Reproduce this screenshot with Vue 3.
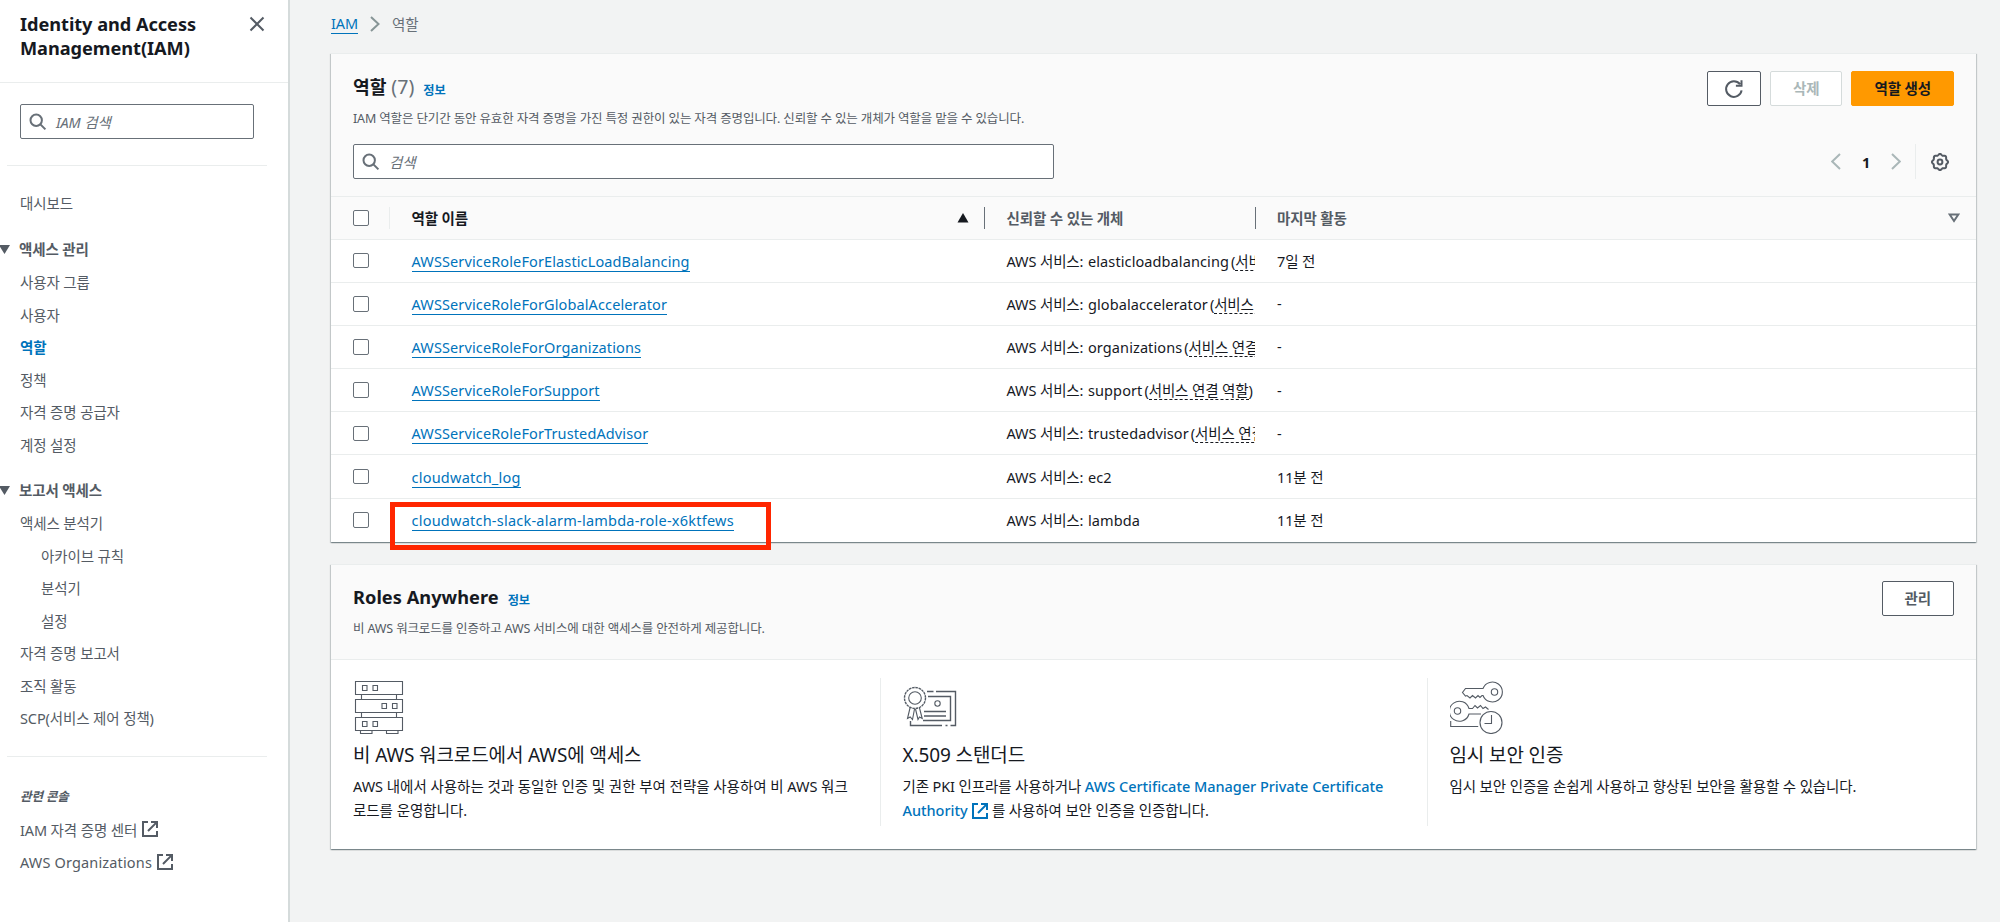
<template>
  <div class="layout">
    <aside class="sidebar">
      <header class="side-header">
        <h2>Identity and Access Management(IAM)</h2>
        <svg class="close" width="16" height="16" viewBox="0 0 16 16"><path d="M1.5 1.5l13 13M14.5 1.5l-13 13" /></svg>
      </header>
      <div class="side-search search">
        <svg width="18" height="18" viewBox="0 0 18 18"><circle cx="7.2" cy="7.2" r="5.7" /><path d="M11.4 11.4l5 5" /></svg>
        <span>IAM 검색</span>
      </div>
      <hr class="first">
      <nav>
        <a class="item">대시보드</a>
        <div v-for="group in groups" :key="group.title" class="group">
          <div class="item group-title">
            <svg width="11" height="9" viewBox="0 0 11 9"><path d="M0 0h11l-5.5 9z" /></svg>
            {{ group.title }}
          </div>
          <a v-for="item in group.items" :key="item.text" class="item" :class="{ active: item.active, sub: item.sub }">{{ item.text }}</a>
        </div>
      </nav>
      <hr class="second">
      <div class="related">관련 콘솔</div>
      <a v-for="text in related" :key="text" class="item external">
        {{ text }}
        <svg class="ext" width="16" height="16" viewBox="0 0 16 16"><path d="M6 1H1v14h14v-5M9 1h6v6M14.6 1.4L6 10" /></svg>
      </a>
    </aside>

    <main>
      <div class="breadcrumb">
        <a>IAM</a>
        <svg width="10" height="16" viewBox="0 0 10 16"><path d="M1 1l7.5 7L1 15" /></svg>
        <span>역할</span>
      </div>

      <section class="panel">
        <div class="panel-header roles-header">
          <div class="title-row">
            <h1>역할 <span class="count">(7)</span></h1>
            <a class="info">정보</a>
            <div class="actions">
              <button class="refresh">
                <svg width="20" height="20" viewBox="0 0 20 20"><path d="M17.6 11.4A7.8 7.8 0 1 1 16 5.2M17.5 1.2v5.6h-5.6" /></svg>
              </button>
              <button class="disabled">삭제</button>
              <button class="primary">역할 생성</button>
            </div>
          </div>
          <p class="desc">IAM 역할은 단기간 동안 유효한 자격 증명을 가진 특정 권한이 있는 자격 증명입니다. 신뢰할 수 있는 개체가 역할을 맡을 수 있습니다.</p>
          <div class="tools">
            <div class="search roles-search">
              <svg width="18" height="18" viewBox="0 0 18 18"><circle cx="7.2" cy="7.2" r="5.7" /><path d="M11.4 11.4l5 5" /></svg>
              <span>검색</span>
            </div>
            <div class="pager">
              <svg width="10" height="17" viewBox="0 0 10 17"><path d="M9 1L1.2 8.5 9 16" /></svg>
              <b>1</b>
              <svg width="10" height="17" viewBox="0 0 10 17"><path d="M1 1l7.8 7.5L1 16" /></svg>
              <span class="gear">
                <svg width="18" height="18" viewBox="0 0 18 18">
                  <path :d="gearPath" />
                  <circle cx="9" cy="9" r="2.4" />
                </svg>
              </span>
            </div>
          </div>
        </div>

        <table>
          <colgroup><col class="c-check"><col class="c-name"><col class="c-entity"><col></colgroup>
          <thead>
            <tr>
              <th><span class="check" /></th>
              <th class="sorted">
                <div class="th-inner">역할 이름<svg width="12" height="10" viewBox="0 0 12 10"><path d="M6 0l5.5 9.5h-11z" /></svg></div>
              </th>
              <th><div class="th-inner">신뢰할 수 있는 개체</div></th>
              <th>
                <div class="th-inner">마지막 활동<svg class="hollow" width="12" height="10" viewBox="0 0 12 10"><path d="M1.7 1.5h8.6L6 8z" /></svg></div>
              </th>
            </tr>
          </thead>
          <tbody>
            <tr v-for="role in roles" :key="role.name">
              <td><span class="check" /></td>
              <td><a class="role-link" :class="{ custom: !role.linked }">{{ role.name }}</a></td>
              <td>AWS 서비스: <span class="service">{{ role.service }}</span><template v-if="role.linked">(<span class="linked">서비스 연결 역할</span>)</template></td>
              <td>{{ role.activity }}</td>
            </tr>
          </tbody>
        </table>
        <div class="highlight" />
      </section>

      <section class="panel">
        <div class="panel-header anywhere-header">
          <div class="title-row">
            <h1>Roles Anywhere</h1>
            <a class="info">정보</a>
            <div class="actions"><button>관리</button></div>
          </div>
          <p class="desc">비 AWS 워크로드를 인증하고 AWS 서비스에 대한 액세스를 안전하게 제공합니다.</p>
        </div>
        <div class="features">
          <div class="feature">
            <svg class="art" width="52" height="54" viewBox="0 0 52 54">
              <path d="M2.5 1.5h47v13h-47zM2.5 19.5h47v13h-47zM2.5 37.5h47v13h-47zM8.5 14.5v5M43.5 14.5v5M8.5 32.5v5M43.5 32.5v5M7.5 50.5v3h11.5v-3M33.5 50.5v3h11.5v-3" />
              <path d="M9.5 5.5h4.5v5h-4.5zM20 5.5h4.5v5h-4.5zM29 23.5h4.5v5h-4.5zM39.5 23.5h4.5v5h-4.5zM9.5 41.5h4.5v5h-4.5zM20 41.5h4.5v5h-4.5z" />
            </svg>
            <h3>비 AWS 워크로드에서 AWS에 액세스</h3>
            <p class="loose">AWS 내에서 사용하는 것과 동일한 인증 및 권한 부여 전략을 사용하여 비 AWS 워크로드를 운영합니다.</p>
          </div>
          <div class="feature">
            <svg class="art" width="54" height="54" viewBox="0 -1 54 54">
              <circle cx="12" cy="17" r="6.3" />
              <circle cx="12" cy="17" r="10.5" stroke-width="1.4" stroke-dasharray="2.6 .7" />
              <path d="M7 27L4.5 37.5l2.7-1.5 2.3 2.5L11.5 28M12.5 28l2.5 10.5 1.5-2.5 2.7 1.5L16.5 27" />
              <path class="frame" d="M24 10.5h6.5M33 10.5h19.5v34h-5M44.5 44.5h-2M39 44.5H7.5V40M25 15.5h22.5v24H20M21 30.5h22M21 35h22" />
              <circle cx="34.5" cy="22.5" r="2.7" />
            </svg>
            <h3>X.509 스탠더드</h3>
            <p>기존 PKI 인프라를 사용하거나 <a>AWS Certificate Manager Private Certificate Authority <svg class="ext" width="16" height="16" viewBox="0 0 16 16"><path d="M6 1H1v14h14v-5M9 1h6v6M14.6 1.4L6 10" /></svg></a> 를 사용하여 보안 인증을 인증합니다.</p>
          </div>
          <div class="feature">
            <svg class="art" width="54" height="54" viewBox="0 0 54 54">
              <path d="M33 8.5A10 10 0 1 1 33 15.5H32l-2 2-2-2-2.5 2.5-3-2.5-2.5 2.5-3-2.5-1.5.5-3-3.5 3-4z" />
              <circle cx="44.5" cy="12" r="3.2" />
              <path d="M38.5 29.5l-3-2.5-2.5 1.5-2.5-3-3 2.5-2.5-2.5-2.5 3h-3.5A10 10 0 1 0 19 34h12" />
              <circle cx="7.5" cy="31" r="3.2" />
              <circle cx="41" cy="42.5" r="11" />
              <path d="M41.5 35v8.5h-7M.7 41v5.5h27.5" />
            </svg>
            <h3>임시 보안 인증</h3>
            <p>임시 보안 인증을 손쉽게 사용하고 향상된 보안을 활용할 수 있습니다.</p>
          </div>
        </div>
      </section>
    </main>
  </div>
</template>

<script setup>
const groups = [
  {
    title: '액세스 관리',
    items: [
      { text: '사용자 그룹' },
      { text: '사용자' },
      { text: '역할', active: true },
      { text: '정책' },
      { text: '자격 증명 공급자' },
      { text: '계정 설정' }
    ]
  },
  {
    title: '보고서 액세스',
    items: [
      { text: '액세스 분석기' },
      { text: '아카이브 규칙', sub: true },
      { text: '분석기', sub: true },
      { text: '설정', sub: true },
      { text: '자격 증명 보고서' },
      { text: '조직 활동' },
      { text: 'SCP(서비스 제어 정책)' }
    ]
  }
]

const related = ['IAM 자격 증명 센터', 'AWS Organizations']

const roles = [
  { name: 'AWSServiceRoleForElasticLoadBalancing', service: 'elasticloadbalancing', linked: true, activity: '7일 전' },
  { name: 'AWSServiceRoleForGlobalAccelerator', service: 'globalaccelerator', linked: true, activity: '-' },
  { name: 'AWSServiceRoleForOrganizations', service: 'organizations', linked: true, activity: '-' },
  { name: 'AWSServiceRoleForSupport', service: 'support', linked: true, activity: '-' },
  { name: 'AWSServiceRoleForTrustedAdvisor', service: 'trustedadvisor', linked: true, activity: '-' },
  { name: 'cloudwatch_log', service: 'ec2', activity: '11분 전' },
  { name: 'cloudwatch-slack-alarm-lambda-role-x6ktfews', service: 'lambda', activity: '11분 전' }
]

// eight-toothed outline of the settings icon
const gearPath = Array.from({ length: 96 }, (_, i) => {
  const a = (i / 96) * Math.PI * 2
  const r = 7.4 + 0.65 * Math.cos(a * 8)
  return `${i ? 'L' : 'M'}${(9 + r * Math.cos(a)).toFixed(2)} ${(9 + r * Math.sin(a)).toFixed(2)}`
}).join('') + 'Z'
</script>

<style>
body {
  margin: 0;
  background: #f2f3f3;
}
</style>

<style scoped>
.layout {
  display: flex;
  height: 922px;
  overflow: hidden;
  background: #f2f3f3;
  color: #16191f;
  font-family: "Noto Sans", "Noto Sans CJK KR", sans-serif;
  font-size: 14.5px;
  letter-spacing: -0.12px;
}

.layout * {
  box-sizing: border-box;
}

svg {
  fill: none;
  stroke: #545b64;
  stroke-width: 2;
  flex: none;
}

h1, h2, h3, p {
  margin: 0;
}

.sidebar {
  width: 290px;
  flex: none;
  background: #fff;
  border-right: 2px solid #d5dbdb;
  color: #545b64;
}

.side-header {
  display: flex;
  justify-content: space-between;
  height: 83px;
  padding: 12px 23px 0 20px;
  border-bottom: 1px solid #eaeded;
}

.side-header h2 {
  width: 200px;
  font-size: 18.2px;
  line-height: 24px;
  letter-spacing: -0.05px;
  color: #16191f;
}

.close {
  margin-top: 4px;
}

.search {
  display: flex;
  align-items: center;
  height: 35px;
  padding-left: 8px;
  gap: 9px;
  background: #fff;
  border: 1px solid #687078;
  border-radius: 2px;
  color: #687078;
  font-style: italic;
}

.search svg {
  stroke: #687078;
}

.side-search {
  width: 234px;
  margin: 21px 0 0 20px;
}

hr {
  width: 260px;
  height: 1px;
  margin: 0 0 0 7px;
  border: 0;
  background: #eaeded;
}

.first {
  margin-top: 26px;
  margin-bottom: 20px;
}

.second {
  margin-top: 22px;
  margin-bottom: 23px;
}

.item {
  display: flex;
  align-items: center;
  height: 32.5px;
  padding-left: 20px;
}

.item.sub {
  padding-left: 41px;
}

.item.active {
  color: #0073bb;
  font-weight: 700;
}

.group {
  margin-top: 13.5px;
}

.group + .group {
  margin-top: 12.5px;
}

.group-title {
  height: 33.5px;
  padding: 0 0 1px;
  gap: 9px;
  font-weight: 700;
}

.group-title svg {
  margin: 2px 0 0 -1px;
  fill: #545b64;
  stroke: none;
}

.related {
  height: 33px;
  padding-left: 20px;
  font-size: 12.5px;
  line-height: 33px;
  font-style: italic;
  font-weight: 700;
}

.external {
  gap: 5px;
}

.external:last-child {
  letter-spacing: 0.15px;
}

main {
  flex: 1;
  padding: 0 24.5px 0 41px;
}

.breadcrumb {
  display: flex;
  align-items: center;
  gap: 12px;
  height: 47px;
  margin-bottom: 6px;
  color: #687078;
}

.breadcrumb a {
  color: #0073bb;
  line-height: 20px;
  border-bottom: 1px solid #0073bb;
}

.breadcrumb span {
  margin-top: -1px;
}

.breadcrumb svg {
  stroke: #879596;
}

.panel {
  position: relative;
  margin-bottom: 22px;
  background: #fff;
  border-top: 1px solid #eaeded;
  box-shadow: 0 1px 1px 0 rgba(0, 28, 36, .3), 1px 1px 1px 0 rgba(0, 28, 36, .15), -1px 1px 1px 0 rgba(0, 28, 36, .15);
}

.panel-header {
  padding: 17px 21.5px 0 22px;
  background: #fafafa;
  border-bottom: 1px solid #eaeded;
}

.roles-header {
  height: 143px;
}

.anywhere-header {
  height: 95px;
  padding-top: 16px;
}

.title-row {
  display: flex;
  height: 35px;
  align-items: center;
}

h1 {
  margin-top: -4px;
  font-size: 18.2px;
  line-height: 26px;
  letter-spacing: 0.04px;
}

.anywhere-header h1 {
  margin-top: -2px;
}

.count {
  color: #687078;
  font-size: 19.5px;
  font-weight: 400;
}

.info {
  margin: 2px 0 0 9px;
  color: #0073bb;
  font-size: 12.2px;
  font-weight: 700;
}

.anywhere-header .info {
  margin-top: 4px;
}

.actions {
  display: flex;
  gap: 9px;
  margin-left: auto;
}

button {
  display: flex;
  align-items: center;
  justify-content: center;
  height: 35px;
  padding: 0 22px 2px;
  background: #fff;
  border: 1px solid #545b64;
  border-radius: 2px;
  color: #545b64;
  font: inherit;
  font-weight: 700;
  letter-spacing: inherit;
}

.refresh {
  width: 54px;
  padding: 0;
}

.disabled {
  color: #aab7b8;
  border-color: #d5dbdb;
}

.primary {
  color: #16191f;
  background: #ff9900;
  border-color: #ff9900;
}

.desc {
  font-size: 12.5px;
  line-height: 18px;
  margin-top: 4px;
  color: #545b64;
  letter-spacing: -0.14px;
}

.tools {
  display: flex;
  justify-content: space-between;
  margin-top: 16px;
}

.roles-search {
  width: 701px;
}

.pager {
  display: flex;
  align-items: center;
  margin-right: 5px;
}

.pager > svg {
  stroke: #aab7b8;
}

.pager b {
  width: 50px;
  text-align: center;
}

.gear {
  display: flex;
  align-items: center;
  height: 35px;
  margin-left: 14px;
  padding-left: 15px;
  border-left: 1px solid #eaeded;
}

table {
  width: 100%;
  table-layout: fixed;
  border-collapse: separate;
  border-spacing: 0;
}

.c-check {
  width: 58px;
}

.c-name {
  width: 595px;
}

.c-entity {
  width: 270.5px;
}

th {
  height: 42.5px;
  padding: 0;
  background: #fafafa;
  border-bottom: 1px solid #eaeded;
  color: #545b64;
  text-align: left;
}

.th-inner {
  display: flex;
  align-items: center;
  justify-content: space-between;
  height: 22px;
  padding: 0 15.5px 0 21.5px;
  border-left: 1px solid #687078;
}

.sorted {
  color: #16191f;
}

.sorted .th-inner {
  border-left-color: #eaeded;
}

.th-inner svg {
  fill: #16191f;
  stroke: none;
}

.th-inner .hollow {
  fill: none;
  stroke: #687078;
}

td {
  height: 43.2px;
  padding: 0 0 0 22.5px;
  overflow: hidden;
  white-space: nowrap;
  border-bottom: 1px solid #eaeded;
}

td:nth-child(n + 3) {
  padding-bottom: 1px;
}

tr:last-child td {
  border-bottom: 0;
}

th:first-child,
td:first-child {
  padding-left: 22px;
}

.check {
  display: block;
  width: 15.5px;
  height: 15.5px;
  background: #fff;
  border: 1px solid #687078;
  border-radius: 2px;
}

.role-link {
  display: inline-block;
  line-height: 19px;
  margin-top: 2px;
  color: #0073bb;
  border-bottom: 1px solid #0073bb;
  letter-spacing: 0.12px;
}

.role-link.custom {
  letter-spacing: 0.23px;
}

.service {
  margin: 0 2px 0 1px;
  letter-spacing: 0.1px;
}

.linked {
  display: inline-block;
  line-height: 18px;
  border-bottom: 1px dashed #16191f;
}

.highlight {
  position: absolute;
  left: 59px;
  bottom: -8px;
  width: 381px;
  height: 48px;
  border: 5px solid #ff2600;
}

.features {
  display: grid;
  grid-template-columns: 550px 547px 1fr;
  padding: 18px 0 23px;
}

.feature {
  height: 148px;
  padding: 2px 30px 0 22px;
  border-right: 1px solid #eaeded;
}

.feature + .feature {
  padding-left: 21.5px;
}

.feature:last-child {
  border-right: 0;
}

.art {
  display: block;
  stroke-width: 1.1;
  margin-bottom: 8px;
}

.frame {
  stroke-width: 1.4;
}

.feature h3 {
  font-size: 19px;
  font-weight: 400;
  line-height: 26px;
  margin-bottom: 6px;
}

.feature p {
  line-height: 24px;
  word-break: break-all;
}

.feature .loose {
  padding-right: 0;
  letter-spacing: -0.03px;
}

.feature p a {
  word-break: normal;
  color: #0073bb;
  font-weight: 500;
  letter-spacing: -0.03px;
}

.feature .ext {
  margin-left: 1px;
  vertical-align: -3px;
  stroke: #0073bb;
}
</style>
